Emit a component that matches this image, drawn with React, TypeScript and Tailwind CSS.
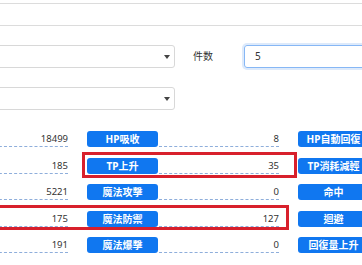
import React from 'react';

type Cell = { value: string; label: string };

const rows: Cell[][] = [
  [
    { value: '18499', label: 'HP吸收' },
    { value: '8', label: 'HP自動回復' },
  ],
  [
    { value: '185', label: 'TP上升' },
    { value: '35', label: 'TP消耗減輕' },
  ],
  [
    { value: '5221', label: '魔法攻擊' },
    { value: '0', label: '命中' },
  ],
  [
    { value: '175', label: '魔法防禦' },
    { value: '127', label: '迴避' },
  ],
  [
    { value: '191', label: '魔法爆擊' },
    { value: '0', label: '回復量上升' },
  ],
];

const font = { fontFamily: '"Noto Sans", "Noto Sans CJK TC", sans-serif' };

const Caret: React.FC = () => (
  <svg width="6" height="4" viewBox="0 0 6 4" className="mr-[4px]">
    <path d="M0 0 L6 0 L3 4 Z" fill="#444" />
  </svg>
);

const StatCell: React.FC<{ cell: Cell }> = ({ cell }) => (
  <>
    <div className="w-[120px] shrink-0 h-[16px] border-b border-dashed border-[#8eaedb] text-right text-[9.5px] leading-[15px] text-[#333] mr-[19px]">
      {cell.value}
    </div>
    <button className="w-[71px] h-[16px] shrink-0 rounded-[3px] bg-[#1077f0] text-white text-[10px] font-bold leading-[16px] text-center mr-[1px] whitespace-nowrap">
      {cell.label}
    </button>
  </>
);

const App: React.FC = () => {
  return (
    <div className="relative w-[362px] h-[265px] overflow-hidden bg-white" style={font}>
      {/* top input, wider than the window */}
      <div className="mt-[3px] -mx-[10px] h-[23px] border-y border-[#dcdcdc]" />

      <div className="flex items-center mt-[19px] h-[23px]">
        <div className="-ml-[20px] w-[195px] shrink-0 h-[23px] border border-[#d8d8d8] rounded-[3px] flex items-center justify-end">
          <Caret />
        </div>
        <span className="ml-[18px] shrink-0 whitespace-nowrap text-[10px] text-[#333]">件数</span>
        <div className="ml-[31px] w-[140px] shrink-0 h-[23px] border border-[#86b7f5] rounded-[3px] shadow-[0_0_0_2px_rgba(120,170,240,0.25)] flex items-center pl-[10px] text-[10px] text-[#333]">
          5
        </div>
      </div>

      <div className="flex items-center mt-[19px] h-[23px]">
        <div className="-ml-[20px] w-[195px] shrink-0 h-[23px] border border-[#d8d8d8] rounded-[3px] flex items-center justify-end">
          <Caret />
        </div>
      </div>

      <div className="-ml-[52px] mt-[15.75px]">
        {rows.map((row, i) => (
          <div key={i} className="flex items-center h-[26.5px]">
            {row.map((cell, j) => (
              <StatCell key={j} cell={cell} />
            ))}
          </div>
        ))}
      </div>

      {/* highlight boxes */}
      <div className="absolute left-[82px] top-[152px] w-[215px] h-[26px] border-[3px] border-[#d8202c]" />
      <div className="absolute -left-[6px] top-[205px] w-[295px] h-[25px] border-[3px] border-[#d8202c]" />
    </div>
  );
};

export default App;
